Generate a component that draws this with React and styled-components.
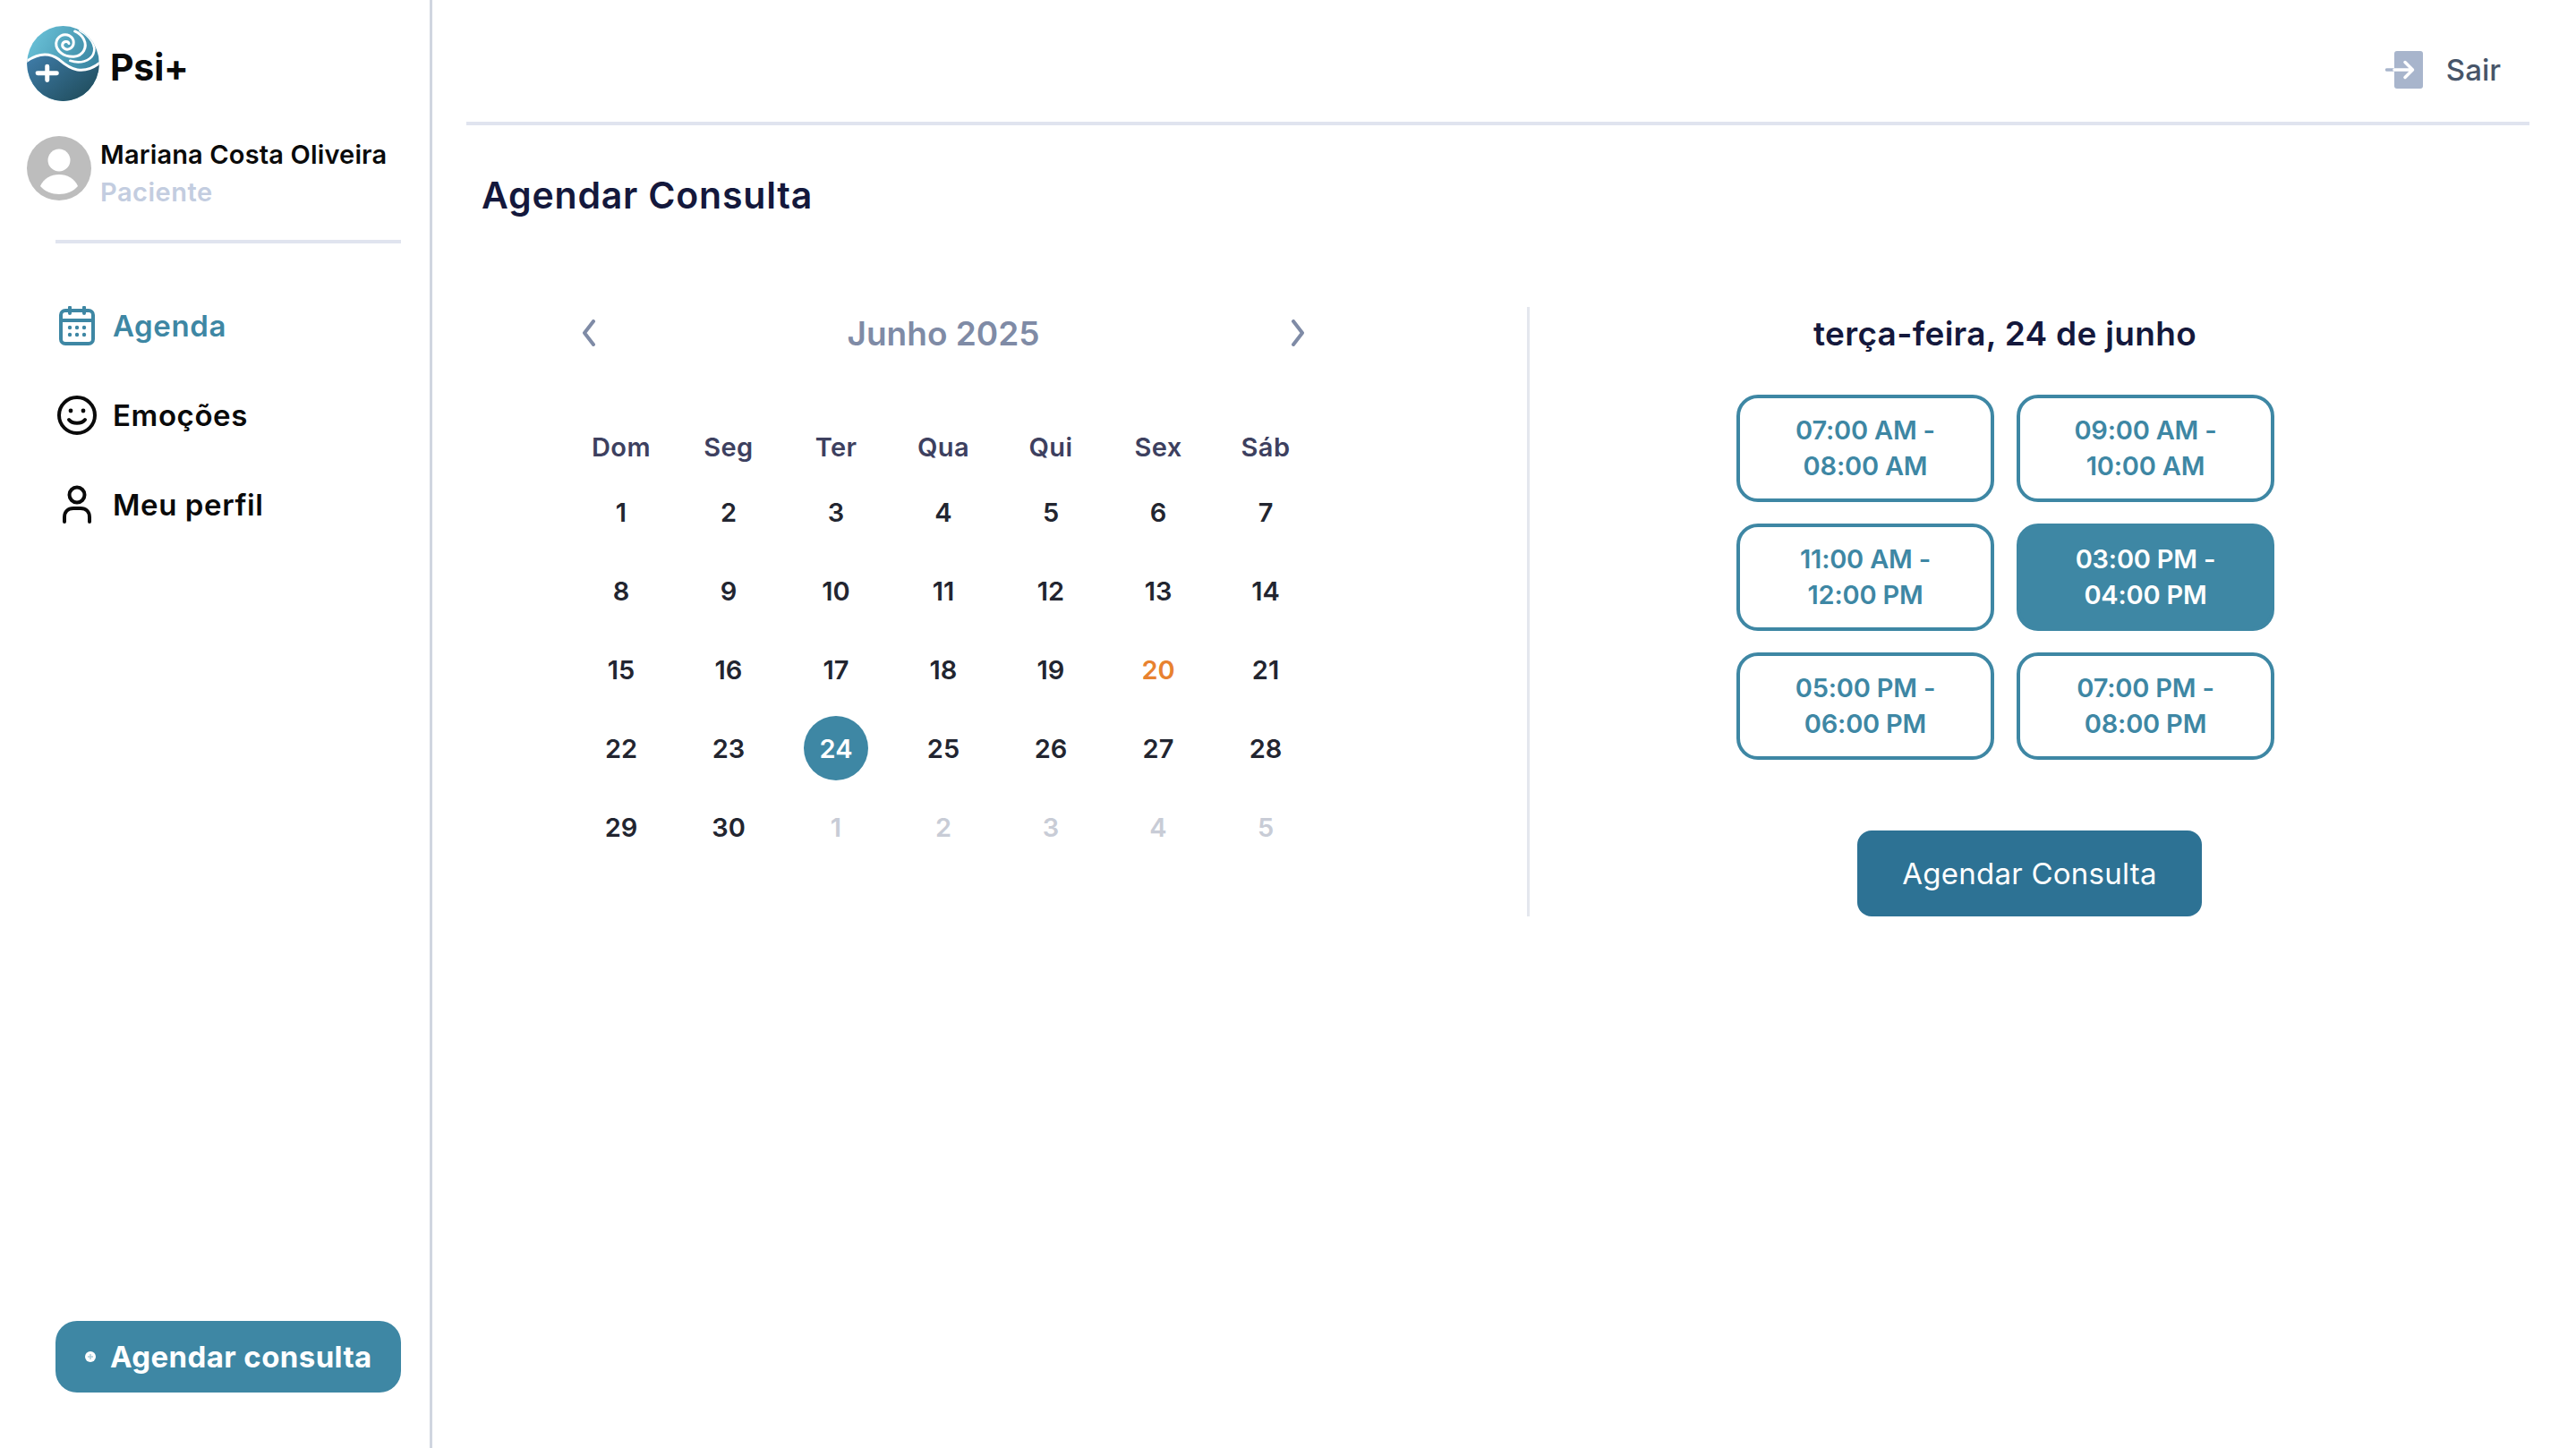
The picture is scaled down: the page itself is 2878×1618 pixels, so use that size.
import React from 'react'
import styled, { createGlobalStyle } from 'styled-components'

const times = [
    ['07:00 AM -', '08:00 AM'],
    ['09:00 AM -', '10:00 AM'],
    ['11:00 AM -', '12:00 PM'],
    ['03:00 PM -', '04:00 PM'],
    ['05:00 PM -', '06:00 PM'],
    ['07:00 PM -', '08:00 PM'],
]
const weekDays = ['Dom', 'Seg', 'Ter', 'Qua', 'Qui', 'Sex', 'Sáb']
const days = [...Array.from({ length: 30 }, (_, i) => ({ n: i + 1 })), ...[1, 2, 3, 4, 5].map((n) => ({ n, out: true }))]

const Logo = () => (
    <svg width="81" height="84" viewBox="27 27 243 253">
        <defs>
            <linearGradient id="logoTop" x1="0" y1="0" x2="1" y2="0.6">
                <stop offset="0" stopColor="#6fc8de" />
                <stop offset="1" stopColor="#35809c" />
            </linearGradient>
            <linearGradient id="logoBottom" x1="0" y1="0.1" x2="1" y2="0.9">
                <stop offset="0" stopColor="#3f7ca8" />
                <stop offset="1" stopColor="#1c4753" />
            </linearGradient>
            <clipPath id="logoClip">
                <ellipse cx="148.500" cy="153.500" rx="121.500" ry="126.500" />
            </clipPath>
        </defs>
        <g clipPath="url(#logoClip)">
            <rect x="27" y="27" width="243" height="253" fill="url(#logoTop)" />
            <path d="M20 150 C60 120 100 115 135 140 C170 170 215 200 280 145 L280 290 L20 290 Z" fill="url(#logoBottom)" />
            <path d="M20 150 C60 120 100 115 135 140 C170 170 215 200 280 145" fill="none" stroke="#fff" strokeWidth="9" />
            <path d="M168 86 C165 76 148 78 146 90 C145 102 160 110 172 103 C188 94 188 70 170 60 C150 50 128 62 125 85 C124 110 150 132 185 130 C215 128 232 100 218 72 C211 58 200 50 188 45" fill="none" stroke="#fff" strokeWidth="9" strokeLinecap="round" />
            <path d="M205 42 C240 60 262 95 250 122 C240 145 205 155 172 144" fill="none" stroke="#fff" strokeWidth="8" strokeLinecap="round" />
            <path d="M95 163 V209 M63 186 H127" stroke="#fff" strokeWidth="15" strokeLinecap="round" />
        </g>
    </svg>
)

const Avatar = () => (
    <svg width="72" height="72" viewBox="0 0 72 72">
        <circle cx="36" cy="36" r="36" fill="#bdbdbd" />
        <circle cx="36" cy="27" r="12.500" fill="#fff" />
        <path d="M15 56 C19 47 27 43 36 43 C45 43 53 47 57 56 C52 62 44 65 36 65 C28 65 20 62 15 56 Z" fill="#fff" />
    </svg>
)

const CalendarIcon = () => (
    <svg width="44" height="44" viewBox="0 0 44 44" fill="none" stroke="currentColor" strokeWidth="4" strokeLinecap="round">
        <rect x="4" y="5" width="36" height="37" rx="5" />
        <path d="M4 16 H40 M14 1.500 V8 M30 1.500 V8" />
        <g fill="currentColor" stroke="none">
            <circle cx="14" cy="24" r="2.200" />
            <circle cx="22" cy="24" r="2.200" />
            <circle cx="30" cy="24" r="2.200" />
            <circle cx="14" cy="32" r="2.200" />
            <circle cx="22" cy="32" r="2.200" />
            <circle cx="30" cy="32" r="2.200" />
        </g>
    </svg>
)

const SmileIcon = () => (
    <svg width="44" height="44" viewBox="0 0 44 44" fill="none" stroke="currentColor" strokeWidth="4" strokeLinecap="round">
        <circle cx="22" cy="22" r="20" />
        <path d="M13 27 C17 32 27 32 31 27" />
        <circle cx="15" cy="17" r="2.400" fill="currentColor" stroke="none" />
        <circle cx="29" cy="17" r="2.400" fill="currentColor" stroke="none" />
    </svg>
)

const UserIcon = () => (
    <svg width="44" height="44" viewBox="0 0 44 44" fill="none" stroke="currentColor" strokeWidth="4" strokeLinecap="round">
        <circle cx="22" cy="11" r="8.500" />
        <path d="M8 41 V36 C8 30 12 26 18 26 H26 C32 26 36 30 36 36 V41" />
    </svg>
)

const ExitIcon = () => (
    <svg width="42" height="42" viewBox="0 0 42 42" fill="none" strokeLinecap="round" strokeLinejoin="round">
        <rect x="10" y="0" width="32" height="42" rx="3" fill="#a8b5cc" />
        <path d="M1.500 21 H10" stroke="#a8b5cc" strokeWidth="3.500" />
        <path d="M10 21 H30 M22 12.500 L30.500 21 L22 29.500" stroke="#fff" strokeWidth="3.500" />
    </svg>
)

const Chevron = ({ flip }) => (
    <svg width="20" height="30" viewBox="0 0 20 30" fill="none" stroke="#7f8ba6" strokeWidth="4" strokeLinecap="round" strokeLinejoin="round">
        <path d={flip ? 'M5 2 L15 15 L5 28' : 'M15 2 L5 15 L15 28'} />
    </svg>
)

const PlusDot = () => (
    <svg width="12" height="12" viewBox="0 0 12 12">
        <circle cx="6" cy="6" r="6" fill="#fff" />
        <path d="M6 3 V9 M3 6 H9" stroke="#a9cbd8" strokeWidth="1.500" />
    </svg>
)

const App = () => {
    return (
        <Page>
            <GlobalStyle />
            <Sidebar>
                <Brand>
                    <Logo />
                    <BrandName>Psi+</BrandName>
                </Brand>
                <UserBox>
                    <Avatar />
                    <UserText>
                        <UserName>Mariana Costa Oliveira</UserName>
                        <UserRole>Paciente</UserRole>
                    </UserText>
                </UserBox>
                <Divider />
                <Nav>
                    <NavItem $active><CalendarIcon />Agenda</NavItem>
                    <NavItem><SmileIcon />Emoções</NavItem>
                    <NavItem><UserIcon />Meu perfil</NavItem>
                </Nav>
                <SideButton><PlusDot />Agendar consulta</SideButton>
            </Sidebar>
            <Main>
                <TopBar>
                    <Logout><ExitIcon />Sair</Logout>
                </TopBar>
                <Title>Agendar Consulta</Title>
                <Content>
                    <CalendarPanel>
                        <MonthRow>
                            <ArrowButton><Chevron /></ArrowButton>
                            <MonthName>Junho 2025</MonthName>
                            <ArrowButton><Chevron flip /></ArrowButton>
                        </MonthRow>
                        <DaysGrid>
                            {weekDays.map((d) => <WeekDay key={d}>{d}</WeekDay>)}
                            {days.map((d) => (
                                <Day key={`${d.n}${d.out ? 'o' : ''}`}>
                                    <DayNumber
                                        $out={d.out}
                                        $today={!d.out && d.n === 20}
                                        $selected={!d.out && d.n === 24}
                                    >
                                        {d.n}
                                    </DayNumber>
                                </Day>
                            ))}
                        </DaysGrid>
                    </CalendarPanel>
                    <TimePanel>
                        <DateTitle>terça-feira, 24 de junho</DateTitle>
                        <Slots>
                            {times.map((t, i) => (
                                <Slot key={t[0]} $selected={i === 3}>
                                    <span>{t[0]}</span>
                                    <span>{t[1]}</span>
                                </Slot>
                            ))}
                        </Slots>
                        <ConfirmButton>Agendar Consulta</ConfirmButton>
                    </TimePanel>
                </Content>
            </Main>
        </Page>
    )
}

const GlobalStyle = createGlobalStyle`
    html, body {
        margin: 0;
        padding: 0;
        background: #fff;
    }
    * {
        box-sizing: border-box;
    }
    body {
        font-family: Inter, "Liberation Sans", sans-serif;
    }
`

const Page = styled.div`
    display: flex;
    width: 2878px;
    height: 1618px;
    background: #fff;
`

const Sidebar = styled.aside`
    display: flex;
    flex-direction: column;
    width: 483px;
    height: 100%;
    padding: 29px 0 62px 30px;
    border-right: 3px solid #d0d6e0;
`

const Brand = styled.div`
    display: flex;
    align-items: center;
    gap: 12px;
    height: 84px;
`

const BrandName = styled.div`
    font-size: 41px;
    font-weight: 700;
    letter-spacing: -0.2px;
    color: #0a0a0a;
    margin-top: 7px;
`

const UserBox = styled.div`
    display: flex;
    align-items: center;
    gap: 10px;
    margin-top: 39px;
    height: 72px;
`

const UserText = styled.div`
    display: flex;
    flex-direction: column;
    gap: 4px;
    margin-top: 12px;
`

const UserName = styled.div`
    font-size: 29px;
    line-height: 38px;
    font-weight: 600;
    color: #0a0a0a;
    letter-spacing: 0.15px;
    white-space: nowrap;
`

const UserRole = styled.div`
    font-size: 29px;
    line-height: 38px;
    font-weight: 600;
    letter-spacing: 0.5px;
    color: #c3cde0;
`

const Divider = styled.div`
    width: 386px;
    height: 4px;
    margin: 44px 0 0 32px;
    background: #e0e4ef;
`

const Nav = styled.nav`
    display: flex;
    flex-direction: column;
    margin: 42px 0 0 34px;
`

const NavItem = styled.a`
    display: flex;
    align-items: center;
    gap: 18px;
    height: 100px;
    font-size: 33px;
    font-weight: 600;
    letter-spacing: 0.6px;
    color: ${(p) => (p.$active ? '#3e87a4' : '#0a0a0a')};
`

const SideButton = styled.button`
    display: flex;
    align-items: center;
    gap: 16px;
    width: 386px;
    height: 80px;
    margin: auto 0 0 32px;
    padding: 0 0 0 33px;
    border: none;
    border-radius: 24px;
    background: #3e87a4;
    color: #fff;
    font-family: inherit;
    font-size: 33px;
    font-weight: 700;
    letter-spacing: 0.4px;
    white-space: nowrap;
`

const Main = styled.main`
    display: flex;
    flex-direction: column;
    width: 2305px;
    margin-left: 38px;
`

const TopBar = styled.header`
    display: flex;
    align-items: center;
    justify-content: flex-end;
    height: 140px;
    padding: 0 32px 0 0;
    border-bottom: 4px solid #e0e4ef;
`

const Logout = styled.a`
    display: flex;
    align-items: center;
    gap: 26px;
    font-size: 33px;
    font-weight: 500;
    color: #475569;
    margin-top: 19px;
`

const Title = styled.h1`
    margin: 53px 0 0 17px;
    height: 50px;
    font-size: 41px;
    line-height: 50px;
    font-weight: 600;
    letter-spacing: 0.8px;
    color: #14183c;
`

const Content = styled.section`
    display: flex;
    margin: 100px 0 0 17px;
`

const CalendarPanel = styled.div`
    width: 1171px;
    height: 681px;
    padding-left: 96px;
    border-right: 3px solid #e4e7ee;
`

const MonthRow = styled.div`
    display: flex;
    align-items: center;
    justify-content: space-between;
    width: 840px;
    height: 58px;
    padding: 0 14px;
    margin-bottom: 70px;
`

const ArrowButton = styled.button`
    display: flex;
    padding: 0;
    border: none;
    background: none;
`

const MonthName = styled.div`
    font-size: 37px;
    font-weight: 600;
    color: #7f8ba6;
`

const DaysGrid = styled.div`
    display: grid;
    grid-template-columns: repeat(7, 120px);
    grid-template-rows: 57px repeat(5, 88px);
`

const WeekDay = styled.div`
    display: flex;
    align-items: center;
    justify-content: center;
    font-size: 29px;
    font-weight: 600;
    letter-spacing: 0.4px;
    color: #3d405f;
`

const Day = styled.div`
    display: flex;
    align-items: center;
    justify-content: center;
`

const DayNumber = styled.span`
    display: flex;
    align-items: center;
    justify-content: center;
    width: 72px;
    height: 72px;
    border-radius: 50%;
    font-size: 29px;
    font-weight: 600;
    background: ${(p) => (p.$selected ? '#3e87a4' : 'transparent')};
    color: ${(p) => {
        if (p.$selected) return '#fff'
        if (p.$today) return '#e8822f'
        if (p.$out) return '#c8ccd6'
        return '#222530'
    }};
`

const TimePanel = styled.div`
    display: flex;
    flex-direction: column;
    padding-left: 231px;
`

const DateTitle = styled.div`
    display: flex;
    align-items: center;
    justify-content: center;
    width: 600px;
    height: 58px;
    font-size: 37px;
    font-weight: 600;
    letter-spacing: 0.3px;
    color: #14183c;
    white-space: nowrap;
`

const Slots = styled.div`
    display: grid;
    grid-template-columns: repeat(2, 288px);
    grid-auto-rows: 120px;
    gap: 24px 25px;
    margin-top: 40px;
`

const Slot = styled.button`
    display: flex;
    flex-direction: column;
    align-items: center;
    justify-content: center;
    border: 4px solid #3e87a4;
    border-radius: 24px;
    background: ${(p) => (p.$selected ? '#3e87a4' : '#fff')};
    color: ${(p) => (p.$selected ? '#fff' : '#3e87a4')};
    font-family: inherit;
    font-size: 29px;
    line-height: 40px;
    font-weight: 600;
    letter-spacing: -0.2px;
`

const ConfirmButton = styled.button`
    width: 385px;
    height: 96px;
    margin: 79px 0 0 135px;
    border: none;
    border-radius: 16px;
    background: #2d7294;
    color: #fff;
    font-family: inherit;
    font-size: 33px;
    font-weight: 400;
    letter-spacing: 0.25px;
`

export default App
